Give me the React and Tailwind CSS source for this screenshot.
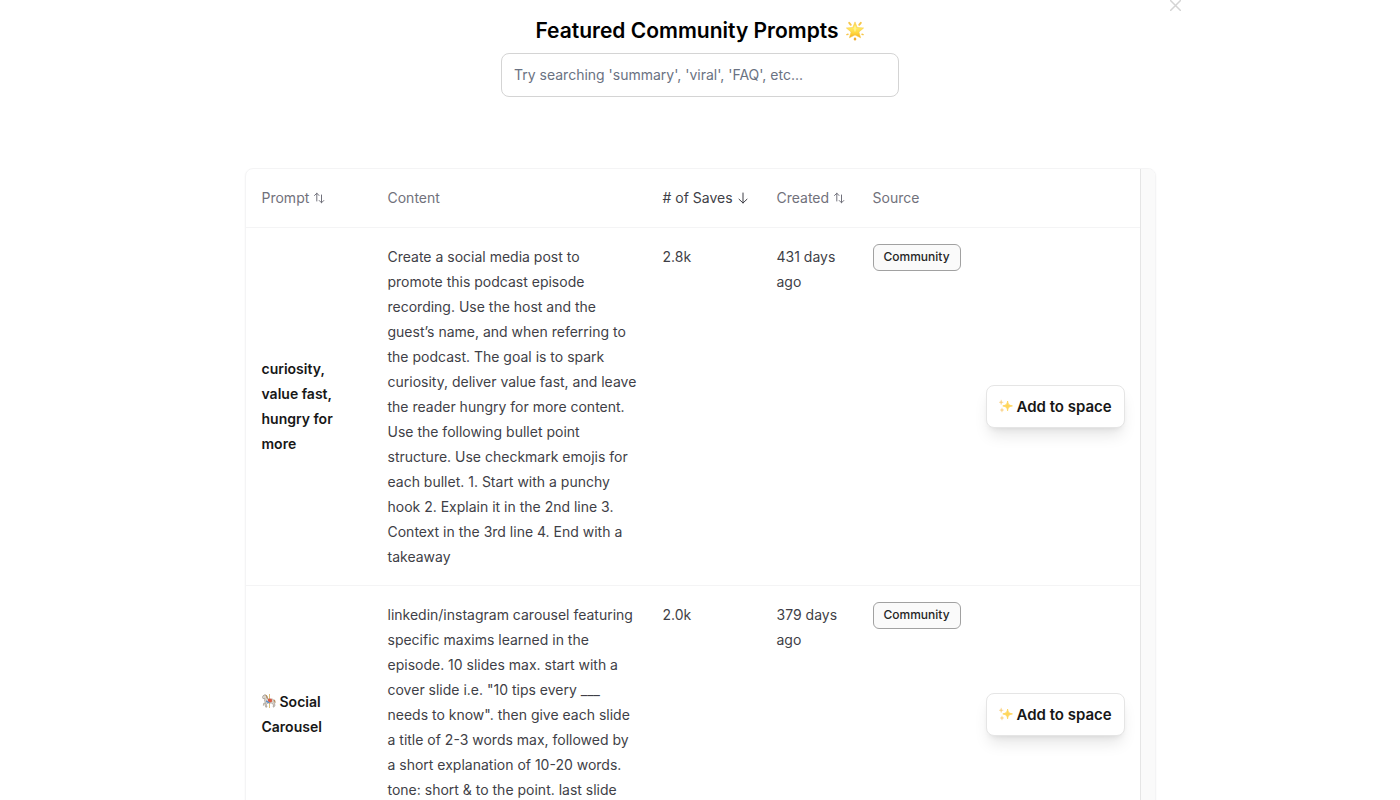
import { useState } from "react";

const PROMPTS = [
  {
    id: "curiosity",
    name: "curiosity, value fast, hungry for more",
    content: `Create a social media post to
promote this podcast episode
recording. Use the host and the
guest’s name, and when referring to
the podcast. The goal is to spark
curiosity, deliver value fast, and leave
the reader hungry for more content.
Use the following bullet point
structure. Use checkmark emojis for
each bullet. 1. Start with a punchy
hook 2. Explain it in the 2nd line 3.
Context in the 3rd line 4. End with a
takeaway`,
    saves: "2.8k",
    created: "431 days ago",
    source: "Community",
  },
  {
    id: "social-carousel",
    icon: CarouselHorse,
    name: "Social Carousel",
    content: `linkedin/instagram carousel featuring
specific maxims learned in the
episode. 10 slides max. start with a
cover slide i.e. "10 tips every ___
needs to know". then give each slide
a title of 2-3 words max, followed by
a short explanation of 10-20 words.
tone: short & to the point. last slide
should be a CTA`,
    saves: "2.0k",
    created: "379 days ago",
    source: "Community",
  },
];

const COLUMNS = [
  { key: "name", label: "Prompt", sortable: true, width: "w-[126px]" },
  { key: "content", label: "Content", width: "w-[275px]" },
  { key: "saves", label: "# of Saves", sortable: true, width: "w-[114px]" },
  { key: "created", label: "Created", sortable: true, width: "w-24" },
  { key: "source", label: "Source", width: "w-[113px]" },
];

const cellClass = "px-4 py-4 align-top";

function GlowingStar() {
  return (
    <svg width="20" height="20" viewBox="0 0 20 20" aria-hidden="true">
      <defs>
        <linearGradient id="star" x1="0" y1="0" x2="0" y2="1">
          <stop offset="0" stopColor="#fdd44a" />
          <stop offset="0.4" stopColor="#ffe95e" />
          <stop offset="0.7" stopColor="#ffd63c" />
          <stop offset="1" stopColor="#f3a91f" />
        </linearGradient>
      </defs>
      <g fill="none" stroke="#f6c64a" strokeWidth="1.9" strokeLinecap="round">
        <path d="M4.2 1.8 5.8 3.8" />
        <path d="M15.8 1.8 14.2 3.8" />
        <path d="M1.9 13.6 3 13.2" strokeWidth="1.5" />
        <path d="M18.1 13.6 17 13.2" strokeWidth="1.5" />
        <path d="M10 17.6V18.3" stroke="#f0ab2c" strokeWidth="2.4" />
      </g>
      <path
        d="M10 .9 12.2 6.5 18.6 7 13.9 11 15.6 16.8 10 13.9 4.4 16.8 6.1 11 1.4 7 7.8 6.5Z"
        fill="url(#star)"
        stroke="#f9cb48"
        strokeWidth=".6"
        strokeLinejoin="round"
      />
      <path d="M10 4 11.5 7.8 10 11.5 8.5 7.8Z" fill="#fff7a0" opacity=".7" />
    </svg>
  );
}

function Sparkles() {
  return (
    <svg width="14" height="14" viewBox="0 0 14 14" aria-hidden="true" className="shrink-0">
      <path
        d="M8.6 2C9 5.2 9.8 6.2 13.4 6.9 9.8 7.6 9 8.6 8.6 11.8 8.2 8.6 7.4 7.6 3.8 6.9 7.4 6.2 8.2 5.2 8.6 2Z"
        fill="#ffd65c"
        stroke="#ffd65c"
        strokeWidth=".9"
        strokeLinejoin="round"
      />
      <g fill="#f9cf80" stroke="#f9cf80" strokeWidth=".3">
        <path d="M2.2.8C2.4 2.5 2.8 3 4.4 3.3 2.8 3.6 2.4 4.1 2.2 5.8 2 4.1 1.6 3.6 0 3.3 1.6 3 2 2.5 2.2.8Z" />
        <path d="M3 8.8C3.2 10.3 3.5 10.7 4.9 11 3.5 11.3 3.2 11.7 3 13.2 2.8 11.7 2.5 11.3 1.1 11 2.5 10.7 2.8 10.3 3 8.8Z" />
      </g>
    </svg>
  );
}

function CarouselHorse() {
  return (
    <svg width="14" height="14" viewBox="0 0 14 14" aria-hidden="true" className="mr-1 inline-block align-[-1px]">
      <path d="M7.5 0V14" stroke="#dcc07a" strokeWidth="1" />
      <path
        d="M1 1.8 3.2.6 5 2.6 5.6 5 10.5 5.2 12.3 6.8 12.2 9 13 11.2 11.8 13.2 11 12.6 11.6 11 9.8 9 5.8 9 4.4 10.6 5 13 3.8 13.2 3 10.6 3.8 8.8 2.6 7 2.8 4.4 1 4.6.3 3.8Z"
        fill="#dcd6cf"
        stroke="#8f877e"
        strokeWidth=".6"
      />
      <path d="M3 .8C5 .7 6 2.6 5.8 4.8L4.6 4.3 4 2Z" fill="#b08a58" />
      <path d="M11.5 5.6C13.4 5.6 13.8 7.5 13.3 9.6L12.2 7.6Z" fill="#b08a58" />
      <path d="M6 4.7H9.6L10.2 7.6 8 8.4 6 7.4Z" fill="#dd5a42" />
      <path d="M4 6.2 6.6 7.4 8 8.9 6 9 4 7.8Z" fill="#5b8fc4" />
      <path d="M3.2 8 1.2 9.2.8 11.6 2 11.8 2.3 10.2 4 9.4Z" fill="#b9b3ab" />
    </svg>
  );
}

function SortIcon({ active }) {
  return (
    <svg
      width="12"
      height="12"
      viewBox="0 0 12 12"
      fill="none"
      stroke="currentColor"
      strokeLinecap="round"
      strokeLinejoin="round"
      aria-hidden="true"
      className="shrink-0"
    >
      {active ? (
        <path d="M6 1V11M2 7.2 6 11 10 7.2" />
      ) : (
        <path d="M1.5 3.5 3.8 1.2 6 3.5M3.8 1.2V9M6.2 8.5 8.5 10.8 10.8 8.5M8.5 10.8V3" />
      )}
    </svg>
  );
}

function PromptRow({ prompt }) {
  const Icon = prompt.icon;
  return (
    <tr className="border-t border-zinc-100">
      <th scope="row" className="px-4 py-4 text-left align-middle font-semibold text-neutral-900">
        {Icon && <Icon />}
        {prompt.name}
      </th>
      <td className={`${cellClass} whitespace-pre-line pr-0`}>{prompt.content}</td>
      <td className={cellClass}>{prompt.saves}</td>
      <td className={cellClass}>{prompt.created}</td>
      <td className={cellClass}>
        <span className="flex h-[27px] w-fit items-center rounded-md border border-neutral-400 bg-neutral-50 px-2.5 text-xs font-medium text-neutral-800">
          {prompt.source}
        </span>
      </td>
      <td className="px-4 py-4 align-middle">
        <button
          type="button"
          className="ml-auto flex h-[43px] items-center gap-1 rounded-lg border border-neutral-200 bg-white px-3 text-[15px] font-semibold whitespace-nowrap text-neutral-900 shadow-lg"
        >
          <Sparkles />
          Add to space
        </button>
      </td>
    </tr>
  );
}

export default function App() {
  const [query, setQuery] = useState("");
  const [sortKey, setSortKey] = useState("saves");

  const rows = PROMPTS.filter((p) =>
    `${p.name} ${p.content}`.toLowerCase().includes(query.toLowerCase()),
  );

  return (
    <main className="h-screen overflow-hidden bg-white font-['Inter',sans-serif] text-sm leading-[25px] text-zinc-700">
      <div className="mx-auto flex max-w-[962px] justify-end">
        <button type="button" aria-label="Close" className="h-[11px] text-neutral-300">
          <svg width="11" height="11" viewBox="0 0 11 11" fill="none" stroke="currentColor" strokeWidth="1.5">
            <path d="M0 0 11 11M11 0 0 11" />
          </svg>
        </button>
      </div>

      <header className="mx-auto flex max-w-[398px] flex-col items-center pt-1">
        <h1 className="flex items-center gap-1.5 text-[21px] leading-8 font-semibold whitespace-nowrap text-black">
          Featured Community Prompts
          <GlowingStar />
        </h1>
        <input
          type="search"
          aria-label="Search prompts"
          value={query}
          onChange={(e) => setQuery(e.target.value)}
          placeholder="Try searching 'summary', 'viral', 'FAQ', etc..."
          className="mt-1.5 h-11 w-full rounded-lg border border-neutral-300 px-3 pb-0.5 placeholder:text-gray-500 focus:outline-none"
        />
      </header>

      <section className="mx-auto mt-[71px] flex max-w-[911px] overflow-hidden rounded-lg border border-zinc-100 shadow-xs">
        <table className="w-full table-fixed border-collapse">
          <thead>
            <tr className="h-[58px] text-left text-zinc-500">
              {COLUMNS.map((col) => (
                <th
                  key={col.key}
                  scope="col"
                  className={`${col.width} pl-4 font-normal whitespace-nowrap ${sortKey === col.key ? "text-zinc-700" : ""}`}
                >
                  {col.sortable ? (
                    <button
                      type="button"
                      onClick={() => setSortKey(col.key)}
                      className="flex items-center gap-1"
                    >
                      {col.label}
                      <SortIcon active={sortKey === col.key} />
                    </button>
                  ) : (
                    col.label
                  )}
                </th>
              ))}
              <td />
            </tr>
          </thead>
          <tbody>
            {rows.map((prompt) => (
              <PromptRow key={prompt.id} prompt={prompt} />
            ))}
          </tbody>
        </table>
        <div className="w-[15px] shrink-0 border-l border-neutral-200 bg-neutral-50" />
      </section>
    </main>
  );
}
